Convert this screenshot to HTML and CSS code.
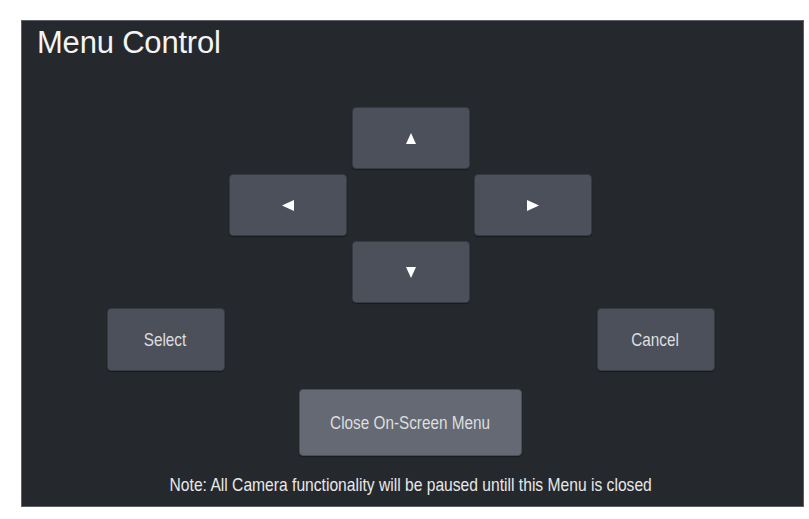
FILE: index.html
```html
<!DOCTYPE html>
<html lang="en">
<head>
<meta charset="utf-8">
<title>Menu Control</title>
<link rel="stylesheet" href="styles.css">
</head>
<body>
<div class="panel">
  <h1 class="title">Menu Control</h1>
  <div class="pad">
    <button class="btn up" aria-label="Up">
      <svg width="10" height="11" viewBox="0 0 10 11"><polygon points="5,0 10,11 0,11" fill="#fff"/></svg>
    </button>
    <button class="btn left" aria-label="Left">
      <svg width="12" height="11" viewBox="0 0 12 11"><polygon points="0,5.5 12,0 12,11" fill="#fff"/></svg>
    </button>
    <button class="btn right" aria-label="Right">
      <svg width="12" height="11" viewBox="0 0 12 11"><polygon points="12,5.5 0,0 0,11" fill="#fff"/></svg>
    </button>
    <button class="btn down" aria-label="Down">
      <svg width="10" height="11" viewBox="0 0 10 11"><polygon points="5,11 10,0 0,0" fill="#fff"/></svg>
    </button>
    <button class="btn select"><span class="narrow">Select</span></button>
    <button class="btn cancel"><span class="narrow">Cancel</span></button>
  </div>
  <button class="btn close"><span class="narrow">Close On-Screen Menu</span></button>
  <p class="note"><span class="narrow">Note: All Camera functionality will be paused untill this Menu is closed</span></p>
</div>
</body>
</html>
```

FILE: styles.css
```css
html, body {
  margin: 0;
  padding: 0;
  background: #ffffff;
}

body {
  font-family: "Liberation Sans", Arial, sans-serif;
}

.panel {
  box-sizing: border-box;
  margin: 20px 0 0 21px;
  width: 783px;
  height: 487px;
  background: #25282d;
  border: 1px solid #5e6065;
  padding: 0 4px 0 0;
  display: flex;
  flex-direction: column;
}

.title {
  margin: 4px 0 0 15px;
  font-size: 31px;
  line-height: 35px;
  font-weight: normal;
  color: #f4f4f4;
  letter-spacing: -0.2px;
}

.pad {
  align-self: center;
  margin-top: 47px;
  display: grid;
  grid-template-columns: repeat(5, 118px);
  grid-template-rows: repeat(4, 62px);
  column-gap: 4.5px;
  row-gap: 5px;
}

.btn {
  box-sizing: border-box;
  margin: 0;
  padding: 0;
  border: 1px solid #363a41;
  border-radius: 4px;
  background: #4b505b;
  color: #dedede;
  font-family: "Liberation Sans", Arial, sans-serif;
  font-size: 18px;
  display: flex;
  align-items: center;
  justify-content: center;
  box-shadow: 0 1px 1px rgba(0, 0, 0, 0.35);
}

.narrow {
  display: inline-block;
  white-space: nowrap;
  transform: scaleX(0.85);
}

.btn .narrow {
  padding-top: 2px;
}

.btn svg {
  display: block;
}

.up { grid-column: 3; grid-row: 1; }
.left { grid-column: 2; grid-row: 2; }
.right { grid-column: 4; grid-row: 2; }
.down { grid-column: 3; grid-row: 3; }
.select { grid-column: 1; grid-row: 4; height: 63px; }
.cancel { grid-column: 5; grid-row: 4; height: 63px; }

.close {
  align-self: center;
  margin-top: 19px;
  width: 223px;
  height: 67px;
  background: #646973;
  border-color: #4a4e56;
}

.note {
  margin: 19px 0 0 0;
  text-align: center;
  font-size: 18.4px;
  line-height: 20px;
  color: #e8e8e8;
}
```
